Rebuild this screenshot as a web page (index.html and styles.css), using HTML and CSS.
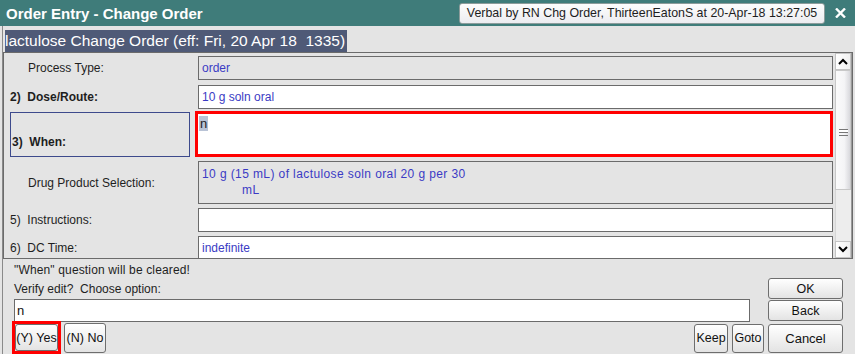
FILE: index.html
```html
<!DOCTYPE html>
<html>
<head>
<meta charset="utf-8">
<link rel="stylesheet" href="styles.css">
</head>
<body>
<div class="window">
  <div class="titlebar">
    <span class="title">Order Entry - Change Order</span>
    <div class="verbal">Verbal by RN Chg Order, ThirteenEatonS at 20-Apr-18 13:27:05</div>
    <svg class="close" width="11" height="10" viewBox="0 0 11 10"><path d="M1 0.5 L10 9.5 M10 0.5 L1 9.5" stroke="#fff" stroke-width="2.4" fill="none"/></svg>
  </div>
  <div class="body">
    <div class="header"><span class="header-text">lactulose Change Order (eff: Fri, 20 Apr 18  1335)</span></div>
    <div class="panel">
      <div class="rows">
        <div class="row r1">
          <div class="label indent">Process Type:</div>
          <div class="field gray">order</div>
        </div>
        <div class="row r2">
          <div class="label bold">2)&nbsp; Dose/Route:</div>
          <div class="field">10 g soln oral</div>
        </div>
        <div class="row r3">
          <div class="label bold focusbox">3)&nbsp; When:</div>
          <div class="field active"><span class="sel">n</span></div>
        </div>
        <div class="row r4">
          <div class="label indent">Drug Product Selection:</div>
          <div class="field gray multi">10 g (15 mL) of lactulose soln oral 20 g per 30<br><span class="cont">mL</span></div>
        </div>
        <div class="row r5">
          <div class="label">5)&nbsp; Instructions:</div>
          <div class="field"></div>
        </div>
        <div class="row r6">
          <div class="label">6)&nbsp; DC Time:</div>
          <div class="field">indefinite</div>
        </div>
      </div>
      <div class="scrollbar">
        <div class="sb-btn"><svg width="10" height="7" viewBox="0 0 10 7"><path d="M1 6 L5 2 L9 6" stroke="#000" stroke-width="2" fill="none"/></svg></div>
        <div class="sb-thumb"><div class="grip"></div></div>
        <div class="sb-track"></div>
        <div class="sb-btn down"><svg width="10" height="7" viewBox="0 0 10 7"><path d="M1 1 L5 5 L9 1" stroke="#000" stroke-width="2" fill="none"/></svg></div>
      </div>
    </div>
    <div class="bottom">
      <div class="left-col">
        <div class="msg wide">"When" question will be cleared!</div>
        <div class="msg">Verify edit?&nbsp; Choose option:</div>
        <div class="input">n</div>
        <div class="btn-row">
          <div class="yes-wrap"><div class="btn yes">(Y) Yes</div></div>
          <div class="btn no">(N) No</div>
          <div class="spacer"></div>
          <div class="btn keep">Keep</div>
          <div class="btn goto">Goto</div>
        </div>
      </div>
      <div class="right-col">
        <div class="btn ok">OK</div>
        <div class="btn back">Back</div>
        <div class="btn cancel">Cancel</div>
      </div>
    </div>
  </div>
</div>
</body>
</html>
```

FILE: styles.css
```css
* { box-sizing: border-box; }
html, body { margin: 0; padding: 0; }
body {
  font-family: "Liberation Sans", Arial, sans-serif;
  background: #e4e4e4;
}
.window {
  width: 855px;
  height: 354px;
  overflow: hidden;
  background: #e4e4e4;
  display: flex;
  flex-direction: column;
}
.titlebar {
  height: 26px;
  flex: none;
  background: #3f7c7a;
  display: flex;
  align-items: center;
  padding-left: 6px;
}
.title {
  color: #fff;
  font-weight: bold;
  font-size: 15px;
}
.verbal {
  margin-left: auto;
  width: 366px;
  height: 21px;
  margin-top: 1px;
  border: 1px solid #8c9c9b;
  border-radius: 3px;
  background: linear-gradient(#fdfdfd, #ececf0);
  color: #1d1d1d;
  font-size: 12.4px;
  line-height: 19px;
  text-align: center;
  white-space: nowrap;
  overflow: hidden;
}
.close {
  margin-left: 10px;
  margin-right: 9px;
}
.body {
  flex: 1;
  margin-left: 2px;
  border-left: 1px solid #8a8a8a;
  padding-top: 4px;
  display: flex;
  flex-direction: column;
}
.header {
  height: 22px;
  padding-left: 2px;
}
.header-text {
  display: inline-block;
  height: 22px;
  background: #4f5a77;
  color: #fff;
  font-size: 15.5px;
  line-height: 22px;
  white-space: pre;
  padding-right: 2px;
}
.panel {
  width: 850px;
  height: 207px;
  border: 1px solid #6b6b6b;
  display: flex;
}
.rows {
  flex: 1;
  overflow: hidden;
  padding-top: 3px;
  padding-right: 2px;
  display: flex;
  flex-direction: column;
  gap: 4px;
}
.row {
  display: grid;
  grid-template-columns: 194px 1fr;
  flex: none;
}
.r1 { height: 24px; }
.r2 { height: 23px; margin-top: 1px; }
.r3 { height: 46px; margin-top: -1px; }
.r4 { height: 43px; }
.r5 { height: 24px; }
.r6 { height: 24px; }
.label {
  font-size: 12px;
  color: #1e1e1e;
  display: flex;
  align-items: center;
  padding-left: 6px;
}
.label.indent { padding-left: 24px; }
.label.bold { font-weight: bold; }
.focusbox {
  margin: 1px 8px 0 6px;
  padding-left: 1px;
  border: 1px solid #3d4a8c;
  align-items: flex-end;
  padding-bottom: 7px;
}
.field {
  border: 1px solid #6b6b6b;
  background: #fff;
  color: #3b3bc4;
  font-size: 12px;
  line-height: 22px;
  padding-left: 3px;
  white-space: nowrap;
}
.field.gray { background: #e4e4e4; }
.field.multi {
  line-height: 16px;
  padding-top: 4px;
  letter-spacing: 0.4px;
}
.cont { padding-left: 40px; }
.field.active {
  margin-left: -3px;
  border: 3px solid #ff0000;
  padding-left: 1px;
  padding-top: 2px;
  line-height: 16px;
  color: #222;
}
.sel {
  background: #b9c3d6;
  padding: 0 1px;
  font-size: 13px;
}
.scrollbar {
  width: 17px;
  flex: none;
  display: flex;
  flex-direction: column;
  background: #ececec;
  border-right: 1px solid #9a9a9a;
}
.sb-btn {
  height: 17px;
  flex: none;
  background: linear-gradient(90deg, #ffffff, #f0f0f0);
  border: 1px solid #c4c4c4;
  display: flex;
  align-items: center;
  justify-content: center;
}
.sb-thumb {
  height: 120px;
  flex: none;
  background: linear-gradient(90deg, #fbfbfb 0%, #f4f4f6 60%, #d8d8dc 100%);
  border: 1px solid #c8c8c8;
  display: flex;
  align-items: center;
  justify-content: center;
}
.grip {
  width: 9px;
  height: 7px;
  border-top: 1px solid #777;
  border-bottom: 1px solid #777;
  margin-top: 4px;
  background: linear-gradient(#fff 0, #fff 2px, #777 2px, #777 3px, transparent 3px);
}
.sb-track {
  flex: 1;
  background: #ededed;
  border-left: 1px solid #d6d6d6;
}
.bottom {
  flex: 1;
  display: flex;
  align-items: flex-end;
  padding-left: 11px;
  padding-top: 2px;
}
.left-col {
  width: 750px;
  display: flex;
  flex-direction: column;
  height: 100%;
}
.msg {
  font-size: 12px;
  color: #1e1e1e;
  line-height: 19px;
  height: 19px;
}
.msg.wide { letter-spacing: 0.15px; }
.input {
  width: 736px;
  height: 23px;
  border: 1px solid #6b6b6b;
  background: #fff;
  font-size: 13px;
  line-height: 21px;
  padding-left: 2px;
  color: #111;
}
.btn-row {
  display: flex;
  align-items: center;
  height: 33px;
  margin-top: -1px;
}
.spacer { flex: 1; }
.btn {
  border: 1px solid #6e6e6e;
  border-radius: 3px;
  background: linear-gradient(#ffffff, #e3e3e3);
  font-size: 12.5px;
  color: #111;
  display: flex;
  align-items: center;
  justify-content: center;
}
.yes-wrap {
  margin-left: -2px;
  border: 3px solid #ff0000;
  height: 33px;
  width: 49px;
  display: flex;
  align-items: center;
  justify-content: center;
}
.btn.yes { width: 43px; height: 27px; }
.btn.no { width: 42px; height: 30px; margin-left: 3px; }
.btn.keep { width: 34px; height: 29px; margin-top: 1px; }
.btn.goto { width: 32px; height: 29px; margin-left: 4px; margin-top: 1px; }
.right-col {
  width: 75px;
  margin-left: 4px;
  display: flex;
  flex-direction: column;
  padding-bottom: 1px;
}
.btn.ok { height: 21px; }
.btn.back { height: 21px; margin-top: 1px; }
.btn.cancel { height: 29px; margin-top: 3px; font-size: 13px; }
```
